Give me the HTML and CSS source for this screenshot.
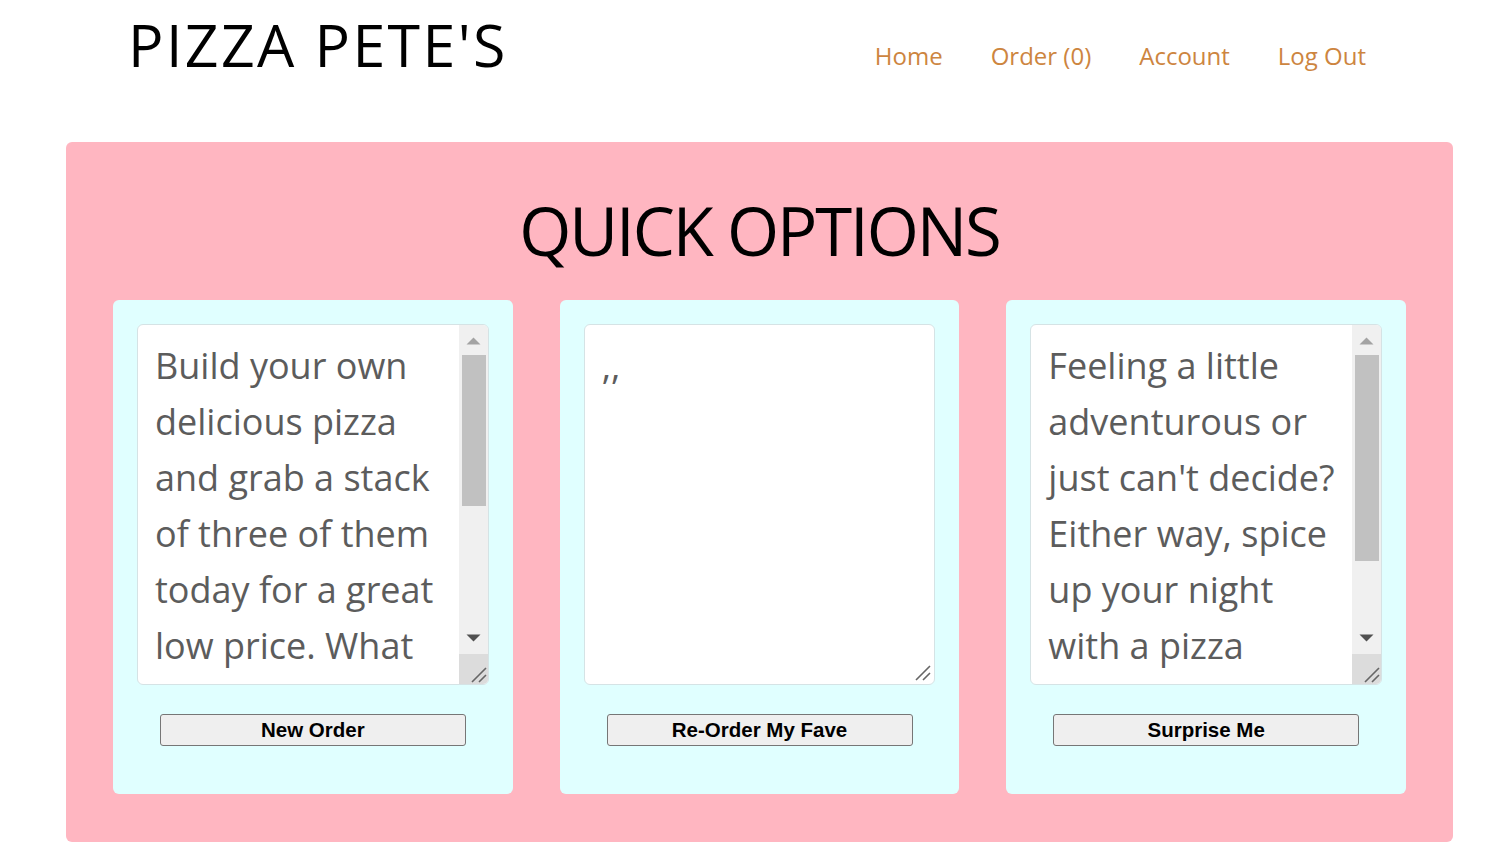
FILE: index.html
```html
<!DOCTYPE html>
<html lang="en">
<head>
<meta charset="utf-8">
<title>Pizza Pete's</title>
<link rel="stylesheet" href="styles.css">
</head>
<body>
<header class="site-header">
  <div class="brand">PIZZA PETE'S</div>
  <nav class="nav">
    <a href="#" class="nav-link">Home</a>
    <a href="#" class="nav-link">Order (0)</a>
    <a href="#" class="nav-link">Account</a>
    <a href="#" class="nav-link">Log Out</a>
  </nav>
</header>
<main class="panel">
  <h1 class="panel-title">QUICK OPTIONS</h1>
  <div class="cards">
    <section class="card">
      <div class="field">
        <textarea class="desc with-bar" readonly>Build your own delicious pizza and grab a stack of three of them today for a great low price. What are you waiting for? Start building yours right now and enjoy every bite!</textarea>
        <div class="vbar">
          <div class="vbar-btn"><svg width="29" height="30" viewBox="0 0 29 30"><path d="M7.5 19.5h14l-7-7z" fill="#a3a3a3"/></svg></div>
          <div class="vbar-track"><div class="vbar-thumb" style="height:151px"></div></div>
          <div class="vbar-btn"><svg width="29" height="30" viewBox="0 0 29 30"><path d="M7.5 10.5h14l-7 7z" fill="#505050"/></svg></div>
          <div class="vbar-corner"><svg width="29" height="30" viewBox="0 0 29 30"><path d="M13 28L27 14M20 28L27 21" stroke="#666" stroke-width="1.6"/></svg></div>
        </div>
      </div>
      <button class="btn">New Order</button>
    </section>
    <section class="card">
      <div class="field">
        <textarea class="desc" readonly>,,</textarea>
        <svg class="grip" width="20" height="20" viewBox="0 0 20 20"><path d="M4 18L18 4M11 18L18 11" stroke="#666" stroke-width="1.6"/></svg>
      </div>
      <button class="btn">Re-Order My Fave</button>
    </section>
    <section class="card">
      <div class="field">
        <textarea class="desc with-bar" readonly>Feeling a little adventurous or just can't decide? Either way, spice up your night with a pizza picked by our chefs!</textarea>
        <div class="vbar">
          <div class="vbar-btn"><svg width="29" height="30" viewBox="0 0 29 30"><path d="M7.5 19.5h14l-7-7z" fill="#a3a3a3"/></svg></div>
          <div class="vbar-track"><div class="vbar-thumb" style="height:206px"></div></div>
          <div class="vbar-btn"><svg width="29" height="30" viewBox="0 0 29 30"><path d="M7.5 10.5h14l-7 7z" fill="#505050"/></svg></div>
          <div class="vbar-corner"><svg width="29" height="30" viewBox="0 0 29 30"><path d="M13 28L27 14M20 28L27 21" stroke="#666" stroke-width="1.6"/></svg></div>
        </div>
      </div>
      <button class="btn">Surprise Me</button>
    </section>
  </div>
</main>
</body>
</html>
```
FILE: styles.css
```css
html, body {
  margin: 0;
  padding: 0;
  background: #ffffff;
}

body {
  font-family: "Open Sans", "Noto Sans", sans-serif;
  color: #000;
}

.site-header {
  display: flex;
  justify-content: space-between;
  align-items: flex-start;
  height: 142px;
  box-sizing: border-box;
  padding: 4px 144px 0 128px;
}

.brand {
  font-size: 59px;
  line-height: 80px;
  letter-spacing: 2.4px;
  color: #000;
}

.nav {
  display: flex;
  gap: 48px;
  margin-top: 36px;
}

.nav-link {
  font-size: 24px;
  line-height: 32px;
  color: #cd853f;
  text-decoration: none;
}

.panel {
  margin: 0 57px 0 66px;
  background: #ffb6c1;
  border-radius: 6px;
  padding: 48px 47px 48px 47px;
}

.panel-title {
  margin: 0 0 30px 0;
  text-align: center;
  font-weight: 400;
  font-size: 67px;
  line-height: 80px;
  letter-spacing: -2.1px;
}

.cards {
  display: flex;
  gap: 47px;
}

.card {
  flex: 1 1 0;
  background: #e0ffff;
  border-radius: 6px;
  padding: 24px 24px 48px 24px;
  display: flex;
  flex-direction: column;
  align-items: center;
}

.field {
  position: relative;
  width: 100%;
  height: 361px;
  margin: 0 0 29px 0;
}

.desc {
  display: block;
  width: 100%;
  height: 100%;
  box-sizing: border-box;
  margin: 0;
  padding: 13px 8px 15px 17px;
  border: 1px solid #d5e3e5;
  border-radius: 6px;
  background: #fff;
  color: #5c5c5c;
  font-family: "Open Sans", "Noto Sans", sans-serif;
  font-size: 36px;
  line-height: 56px;
  outline: none;
  overflow: hidden;
  resize: none;
}

.desc.with-bar {
  padding-right: 38px;
}

.vbar {
  position: absolute;
  top: 1px;
  right: 1px;
  bottom: 1px;
  width: 29px;
  display: flex;
  flex-direction: column;
  background: #f0f0f0;
  border-radius: 0 5px 5px 0;
  overflow: hidden;
}

.vbar-btn {
  height: 30px;
  flex: 0 0 30px;
}

.vbar-btn svg,
.vbar-corner svg {
  display: block;
}

.vbar-track {
  flex: 1 1 auto;
  padding: 0 2px 0 3px;
}

.vbar-thumb {
  background: #c1c1c1;
}

.vbar-corner {
  flex: 0 0 30px;
  height: 30px;
  background: #dcdcdc;
}

.grip {
  position: absolute;
  right: 3px;
  bottom: 3px;
}

.btn {
  width: 306px;
  height: 32px;
  box-sizing: border-box;
  background: #efefef;
  border: 1px solid #767676;
  border-radius: 3px;
  font-family: "Liberation Sans", Arial, sans-serif;
  font-weight: 700;
  font-size: 20.5px;
  color: #000;
  padding: 0;
}
```
